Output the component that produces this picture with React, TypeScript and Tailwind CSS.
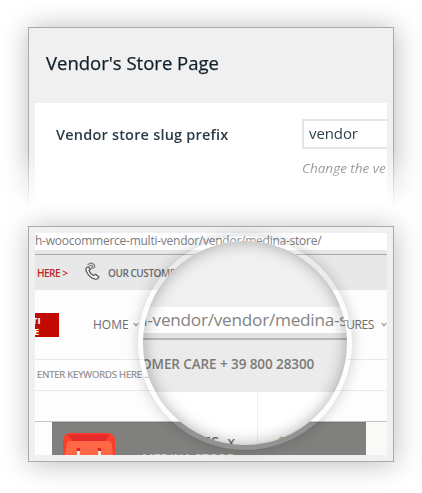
import React from "react";

function Chevron() {
  return (
    <svg className="shrink-0" width="6" height="5" viewBox="0 0 6 5" fill="none" stroke="#888" strokeWidth="1.1">
      <path d="M.6 1 3 3.6 5.4 1" />
    </svg>
  );
}

function Phone() {
  return (
    <svg className="-mt-1 shrink-0" width="15" height="18" viewBox="0 0 15 18" fill="none" stroke="#4a4a4a" strokeWidth="1.1" strokeLinecap="round" strokeLinejoin="round">
      <path d="M3.2 4.8C1 5.500.300 7.200 1.400 9.500c1.700 3.500 4.700 6.500 8.100 7.600 2 .6 3.600-.4 4.400-2.100l-3.300-2.700-2 1.300C6.500 12.500 4.800 10.600 4 8.500l1.500-1.200z" fill="#f4f4f4" />
      <path d="M3 2.700C5.500-.1 9.800 1 9.800 5.600M4.500 3.900c2-1.400 3.700-.1 3.600 2.400M6 5.200c.8-.1 1 .4.900 1.500" stroke="#777" />
    </svg>
  );
}

function Bag() {
  return (
    <svg className="-ml-px shrink-0" width="52" height="22" viewBox="0 0 52 22">
      <path d="M0 22V8Q0 0 8 0h36q8 0 8 8v14z" fill="#fb3f2c" />
      <path d="M5 1.500h42l-5 6.500H10z" fill="#e6292b" />
      <path d="M2 22 4 10q.4-2 3-2h38q3 0 3.500 2L50 22z" fill="#ff6846" />
      <circle cx="15.500" cy="16.500" r="1.800" fill="#d9231e" />
      <circle cx="36.500" cy="16.500" r="1.800" fill="#d9231e" />
      <path d="M15.500 18V22M36.500 18V22" stroke="white" strokeWidth="2.500" />
    </svg>
  );
}

function SettingsPanel() {
  return (
    <div className="h-[226px] w-full overflow-hidden px-7 pt-[27px] [mask-image:linear-gradient(to_bottom,black_150px,transparent_208px)]">
      <section className="h-[240px] w-[366px] border border-[#aaa] bg-[#f0f0f0] px-1.5 shadow-[1px_1px_26px_rgba(0,0,0,0.28)]">
        <h1 className="h-[75px] whitespace-nowrap pl-[11px] pt-[21px] text-[18.500px] leading-7 text-[#10202b] [-webkit-text-stroke:0.25px_#10202b]">
          Vendor's Store Page
        </h1>
        <div className="flex h-[160px] overflow-hidden bg-white pl-[21px] pt-4">
          <div className="w-[246px] shrink-0 whitespace-nowrap pt-[6px] text-[14.500px] font-semibold leading-5 tracking-[0.200px] text-[#2a3b45]">
            Vendor store slug prefix
          </div>
          <div className="w-[100px] shrink-0">
            <div className="h-[30px] border-2 border-[#e5e5e5] bg-white pl-[5px] text-[15px] leading-[25px] tracking-[-0.100px] text-[#32434d]">vendor</div>
            <div className="mt-[9px] whitespace-nowrap text-[13.500px] italic leading-5 text-[#6c6c6c]">Change the ve</div>
          </div>
        </div>
      </section>
    </div>
  );
}

function StorePanel() {
  return (
    <section className="ml-7 h-[236px] w-[366px] border border-[#aaa] bg-[#f0f0f0] p-1.5 shadow-[1px_2px_26px_rgba(0,0,0,0.26)]">
      <div className="flex h-[222px] w-[352px] flex-col overflow-hidden bg-[#fdfdfd]">
        <div className="h-[17px] shrink-0 whitespace-nowrap bg-white text-[12px] leading-[16px] tracking-[-0.250px] text-[#7c7c7c]">
          h-woocommerce-multi-vendor/vendor/medina-store/
        </div>
        <div className="h-[5px] shrink-0 border-b border-[#aaa] bg-[#e7e7e7]" />
        <div className="flex h-[35px] shrink-0 items-center bg-[#e8e8e8] pl-[2px] text-[10px] leading-4">
          <span className="w-[48px] whitespace-nowrap font-semibold tracking-[-0.500px] text-[#bd2525]">HERE &gt;</span>
          <Phone />
          <span className="ml-[8px] whitespace-nowrap font-semibold tracking-[-0.450px] text-[#686868]">OUR CUSTOMER</span>
        </div>
        <div className="flex h-[69px] shrink-0 items-center text-[12px] text-[#6c6c6c]">
          <div className="h-6 w-6 overflow-hidden bg-[#c10b02] pt-[2px] text-[9.500px] font-bold leading-[11px] text-white">
            <div className="-ml-[3px]">TI</div>
            <div className="-ml-[1px]">E</div>
          </div>
          <span className="ml-[34px] w-[40px] shrink-0">HOME</span>
          <Chevron />
          <span className="ml-[201px] w-[41px] shrink-0 tracking-[-0.400px]">TURES</span>
          <Chevron />
        </div>
        <div className="flex h-[32px] shrink-0 items-center border-y border-[#e9e9e9] pl-[2px] text-[9.500px] tracking-[-0.150px] text-[#8c8c8c] [-webkit-text-stroke:0.2px_#8c8c8c]">
          ENTER KEYWORDS HERE ...
        </div>
        <div className="h-[30px] shrink-0" />
        <div className="flex h-[34px] shrink-0 border-t border-[#c5c5c5] bg-[#f9f9f7]">
          <div className="w-[17px] shrink-0 bg-[#fdfdfd]" />
          <div className="flex h-full w-[314px] border-t border-[#747474] bg-[#80807f] pl-3 pt-[10px]">
            <Bag />
            <span className="ml-[27px] mt-[18px] whitespace-nowrap text-[12.500px] font-semibold leading-4 text-[#c4c4c4]">MEDINA STORE</span>
          </div>
        </div>
      </div>
    </section>
  );
}

function Magnifier() {
  return (
    <div className="absolute left-[138px] top-[236px] h-[214px] w-[214px] rounded-full shadow-[0_0_14px_rgba(0,0,0,0.2)]">
      <div className="m-[5px] h-[204px] w-[204px] overflow-hidden rounded-full bg-white">
        <div className="h-[66px] bg-[#f0f0f0]" />
        <div className="h-[26px] whitespace-nowrap bg-white text-[17.200px] leading-[26px] tracking-[-0.250px] text-[#848484]">
          <span className="-ml-[6px]">h-vendor/vendor/medina-s</span>
        </div>
        <div className="h-[7px] border-b-2 border-[#b5b5b5] bg-[#e3e3e3]" />
        <div className="h-[52px] whitespace-nowrap bg-[#ebebeb] pt-[12px] text-[13.500px] font-semibold leading-6 tracking-[-0.090px] text-[#7a7a7a]">
          <span className="-ml-[2px]">OMER CARE + 39 800 28300</span>
        </div>
        <div className="ml-[114px] flex h-[53px] border-l border-[#eee]">
          <span className="-ml-[60px] mt-[39px] whitespace-nowrap text-[15px] font-semibold leading-5 text-[#777]">IES</span>
          <span className="ml-[8px] mt-[39px] text-[15px] leading-5 text-[#666]">x</span>
          <span className="ml-[42px] mt-[39px] text-[15px] leading-5 text-[#b68b59]">C</span>
        </div>
      </div>
      <div className="absolute inset-0 rounded-full border-[5px] border-white/15" />
      <div className="absolute inset-[5px] rounded-full shadow-[inset_0_0_16px_rgba(0,0,0,0.32)]" />
    </div>
  );
}

export default function App() {
  return (
    <main className="relative h-[493px] w-[422px] overflow-hidden bg-white font-['Open_Sans','Noto_Sans',sans-serif]">
      <SettingsPanel />
      <StorePanel />
      <Magnifier />
    </main>
  );
}
